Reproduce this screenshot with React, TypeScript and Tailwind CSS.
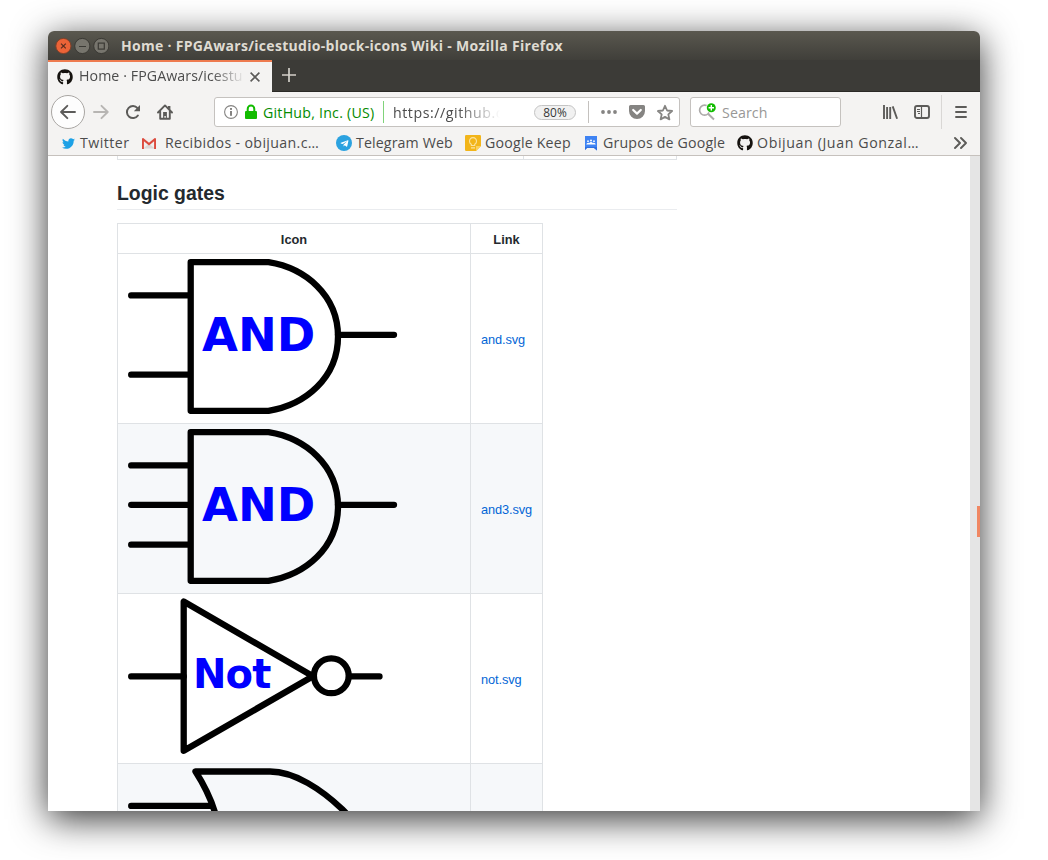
import React from "react";
import { FaGithub, FaTelegramPlane, FaTwitter } from "react-icons/fa";

const ui = "font-['Open_Sans',sans-serif] whitespace-nowrap";

function TitleBar() {
  return (
    <div className="flex h-[29px] shrink-0 items-center bg-gradient-to-b from-[#5a584f] to-[#403f3a] pl-[7px]">
      <svg width="54" height="18" viewBox="0 0 54 18" fill="none">
        <circle cx="8.4" cy="9" r="7.6" fill="#ec6337" stroke="#7f412a" strokeWidth="1" />
        <path d="M6 6.6l4.8 4.8M10.8 6.6L6 11.4" stroke="#5d2f20" strokeWidth="1.3" />
        <circle cx="27.3" cy="9" r="7.6" fill="#77756d" stroke="#3b3a35" strokeWidth="1" />
        <path d="M24 9.5h7" stroke="#3b3a35" strokeWidth="1.2" />
        <circle cx="46.3" cy="9" r="7.6" fill="#77756d" stroke="#3b3a35" strokeWidth="1" />
        <rect x="43.3" y="6.1" width="6" height="6" stroke="#3b3a35" strokeWidth="1.2" />
      </svg>
      <div className={`${ui} ml-[12px] text-[14px] font-bold leading-[18px] tracking-[0.3px] text-[#dfdbd2]`}>
        Home · FPGAwars/icestudio-block-icons Wiki - Mozilla Firefox
      </div>
    </div>
  );
}

function TabStrip() {
  return (
    <div className="flex h-[32px] shrink-0 bg-[#3c3b37]">
      <div className="flex h-[32px] w-[224px] items-center border-t-2 border-[#ee7b4f] bg-[#f4f3f2] pl-[9px]">
        <FaGithub size={16} color="#15120f" />
        <div className={`${ui} mb-[2px] ml-[6px] w-[166px] overflow-hidden text-[14.2px] leading-[20px] tracking-[0.08px] text-[#4c4c4c] [mask-image:linear-gradient(to_right,black_80%,transparent)]`}>
          Home · FPGAwars/icestu
        </div>
        <svg className="ml-[5px]" width="10" height="10" viewBox="0 0 10 10" stroke="#5c5b59" strokeWidth="1.6">
          <path d="M.6.6l8.8 8.8M9.4.6L.6 9.4" />
        </svg>
      </div>
      <div className="flex grow items-center border-b border-[#2a2926] pl-[10px]">
        <svg className="mb-px" width="14" height="14" viewBox="0 0 14 14" stroke="#d3d0c9" strokeWidth="1.7">
          <path d="M7 0v14M0 7h14" />
        </svg>
      </div>
    </div>
  );
}

function NavBar() {
  return (
    <div className="flex h-[40px] shrink-0 items-center pl-[3px]">
      <div className="flex size-[34px] items-center justify-center rounded-full border border-[#a9a6a3] bg-[#fdfdfd]">
        <svg width="16" height="16" viewBox="0 0 16 16" fill="none" stroke="#5c5b59" strokeWidth="1.9" strokeLinecap="round" strokeLinejoin="round">
          <path d="M15 8H1.5M7.3 1.8L1.1 8l6.2 6.2" />
        </svg>
      </div>
      <svg className="ml-2" width="16" height="16" viewBox="0 0 16 16" fill="none" stroke="#b7b5b3" strokeWidth="1.9" strokeLinecap="round" strokeLinejoin="round">
        <path d="M1 8h13.5M8.5 1.8L14.7 8l-6.2 6.2" />
      </svg>
      <svg className="ml-4" width="16" height="16" viewBox="0 0 16 16" fill="none">
        <path d="M12.9 11.5a6 6 0 1 1-.4-7.3" stroke="#5c5b59" strokeWidth="2" strokeLinecap="round" />
        <path d="M15 1v6.2H8.8z" fill="#5c5b59" />
      </svg>
      <svg className="ml-4" width="16" height="16" viewBox="0 0 16 16" fill="none">
        <path d="M1 8.5L8 1.4l7 7.1M3.2 7.5v7.2h9.6V7.5" stroke="#5c5b59" strokeWidth="1.9" strokeLinecap="round" strokeLinejoin="round" />
        <path d="M11 2h2.4v4L11 3.6z" fill="#5c5b59" />
        <path d="M6.1 8h3.8v6H8.8v-2H7.4v2H6.1z" fill="#5c5b59" />
      </svg>

      <div className="ml-[41px] flex h-[30px] w-[466px] shrink-0 items-center rounded-[3px] border border-[#c5c2bf] bg-white pl-[8px]">
        <svg width="16" height="16" viewBox="0 0 16 16" fill="none">
          <circle cx="8" cy="8" r="6.4" stroke="#858482" strokeWidth="1.1" />
          <rect x="7.1" y="7" width="1.8" height="4.8" fill="#777674" />
          <rect x="7.1" y="4" width="1.8" height="1.9" fill="#777674" />
        </svg>
        <svg className="ml-[5px]" width="14" height="16" viewBox="0 0 14 16" fill="none">
          <rect x="1" y="7" width="12" height="8" rx="1" fill="#12bc00" />
          <path d="M3.7 8V4.9a3.3 3.3 0 0 1 6.6 0V8" stroke="#12bc00" strokeWidth="2" />
        </svg>
        <div className={`${ui} ml-[5px] mt-[2px] w-[116px] text-[14.2px] leading-[20px] tracking-[0.23px] text-[#058b00]`}>GitHub, Inc. (US)</div>
        <div className="ml-[4px] h-[22px] w-px bg-[#80d37a]" />
        <div className={`${ui} ml-[9px] mt-[2px] w-[107px] overflow-hidden text-[14.2px] leading-[20px] tracking-[0.55px] text-[#4c4c4c] [mask-image:linear-gradient(to_right,black_60%,transparent)]`}>
          https://github.c
        </div>
        <div className={`${ui} ml-[34px] mt-px flex h-[15px] w-[42px] items-center justify-center rounded-full border border-[#c4c4c4] bg-[#f1f1f1] text-[11.9px] text-[#373737]`}>
          80%
        </div>
        <div className="ml-[12px] h-[22px] w-px bg-[#c4c1be]" />
        <svg className="ml-[11px]" width="18" height="16" viewBox="0 0 18 16" fill="#858482">
          <circle cx="3" cy="8" r="1.9" />
          <circle cx="9" cy="8" r="1.9" />
          <circle cx="15" cy="8" r="1.9" />
        </svg>
        <svg className="ml-[10px]" width="18" height="16" viewBox="0 0 18 16" fill="none">
          <path d="M2.5 1h13A1.5 1.5 0 0 1 17 2.5V7a8 8 0 0 1-16 0V2.5A1.5 1.5 0 0 1 2.500 1z" fill="#858482" />
          <path d="M5.2 6l3.8 3.6L12.8 6" stroke="white" strokeWidth="2.2" strokeLinecap="round" strokeLinejoin="round" />
        </svg>
        <svg className="ml-[10px]" width="18" height="17" viewBox="0 0 18 17" fill="none">
          <path d="M9 1.8l2.1 4.7 5 .5-3.8 3.400 1.1 5L9 12.9l-4.4 2.5 1.1-5L1.9 7l5-.5z" stroke="#858482" strokeWidth="1.8" strokeLinejoin="round" />
        </svg>
      </div>

      <div className="ml-[10px] flex h-[30px] w-[151px] shrink-0 items-center rounded-[3px] border border-[#c5c2bf] bg-white pl-[7px]">
        <svg width="18" height="18" viewBox="0 0 18 18" fill="none">
          <circle cx="6.6" cy="7.2" r="5" stroke="#adabaa" strokeWidth="1.7" />
          <path d="M10.3 11l5.7 5.5" stroke="#adabaa" strokeWidth="2" />
          <circle cx="13.3" cy="4.7" r="5.2" fill="white" />
          <circle cx="13.3" cy="4.7" r="4.5" fill="#12bc00" />
          <path d="M13.3 2v5.4M10.6 4.7H16" stroke="white" strokeWidth="1.4" />
        </svg>
        <div className={`${ui} ml-[6px] mt-[2px] text-[14.2px] leading-[20px] tracking-[0.1px] text-[#989796]`}>Search</div>
      </div>

      <svg className="ml-[41px]" width="16" height="16" viewBox="0 0 16 16" stroke="#5c5b59" strokeWidth="1.9">
        <path d="M2 1v14M5.1 3v12M8.2 3v12M10.7 2.4l4.4 12.3" />
      </svg>
      <svg className="ml-4" width="16" height="16" viewBox="0 0 16 16" fill="none" stroke="#5c5b59">
        <rect x="1" y="2" width="14" height="12" rx="2" strokeWidth="1.9" />
        <path d="M7.5 2v12" strokeWidth="1.2" />
        <path d="M3 5.500h3M3 7.500h3M4 9.500h2" strokeWidth="1" />
      </svg>
      <div className="ml-[11px] h-[34px] w-px bg-[#d9d7d5]" />
      <svg className="ml-[11px]" width="16" height="16" viewBox="0 0 16 16" stroke="#5c5b59" strokeWidth="1.9" strokeLinecap="round">
        <path d="M3 3h10M3 8h10M3 13h10" />
      </svg>
    </div>
  );
}

function GmailIcon() {
  return (
    <svg width="14" height="11" viewBox="0 0 16 12" preserveAspectRatio="none">
      <path d="M1 .5h14v11H1z" fill="#f1eeed" />
      <path d="M1.5 11.5L8 6l6.5 5.5z" fill="#dcd8d6" />
      <path d="M0 1Q0 0 1.4.1L8 5.3 14.6.1Q16 0 16 1v11h-2.2V3.6L8 8.2 2.2 3.6V12H0z" fill="#dc4b3e" />
    </svg>
  );
}

function TelegramIcon() {
  return (
    <span className="flex size-[16px] items-center justify-center rounded-full bg-[#2ba2e0]">
      <FaTelegramPlane size={9} color="white" />
    </span>
  );
}

function KeepIcon() {
  return (
    <svg width="16" height="16" viewBox="0 0 16 16" fill="none">
      <path d="M1.2 0h13.6Q16 0 16 1.2V11l-5 5H1.2Q0 16 0 14.8V1.2Q0 0 1.2 0z" fill="#f2b51a" />
      <path d="M11 16v-5h5z" fill="#fbd15c" />
      <path d="M6.3 9.2a3.5 3.5 0 1 1 3.4 0v1.3H6.3z" stroke="#fbe3a0" strokeWidth="1.1" />
      <path d="M6 12.8h4" stroke="#fbe3a0" strokeWidth="1.2" />
    </svg>
  );
}

function GroupsIcon() {
  return (
    <svg width="14" height="15" viewBox="0 0 14 15">
      <path d="M1 0h12v14.5L10 12H1z" fill="#3f83f3" />
      <path d="M1 14.200L3.200 12H10l3 2.5v-3.5H1z" fill="#2f6fe0" />
      <circle cx="4" cy="5.2" r="0.9" fill="white" />
      <circle cx="7" cy="4.5" r="1" fill="white" />
      <circle cx="10" cy="5.2" r="0.9" fill="white" />
      <path d="M2.3 8.500q.2-1.800 1.9-1.800 .7 0 1.1.3.6-.9 1.7-.9t1.7.9q.4-.3 1.1-.3 1.7 0 1.9 1.800z" fill="white" />
    </svg>
  );
}

const label = `${ui} text-[14.2px] leading-[20px] text-[#4c4c4c]`;

function Bookmarks() {
  return (
    <div className="flex h-[24px] shrink-0 items-center border-b border-[#c6c1bd] pl-[13px] pb-[1px]">
      <div className="flex w-[80px] items-center pl-px">
        <FaTwitter size={13} color="#1da1e6" />
        <span className={`${label} ml-[5px] tracking-[0.45px]`}>Twitter</span>
      </div>
      <div className="flex w-[195px] items-center pl-px">
        <GmailIcon />
        <span className={`${label} ml-[9px] tracking-[0.35px]`}>Recibidos - obijuan.c…</span>
      </div>
      <div className="flex w-[129px] items-center">
        <TelegramIcon />
        <span className={`${label} ml-[4px] tracking-[0.13px]`}>Telegram Web</span>
      </div>
      <div className="flex w-[119px] items-center">
        <KeepIcon />
        <span className={`${label} ml-[4px] tracking-[0.2px]`}>Google Keep</span>
      </div>
      <div className="flex w-[153px] items-center">
        <GroupsIcon />
        <span className={`${label} ml-[5px] tracking-[0.17px]`}>Grupos de Google</span>
      </div>
      <div className="flex w-[216px] items-center">
        <FaGithub size={16} color="#15120f" />
        <span className={`${label} ml-[4px] tracking-[0.6px]`}>Obijuan (Juan Gonzal…</span>
      </div>
      <svg width="14" height="14" viewBox="0 0 14 14" fill="none" stroke="#5c5b59" strokeWidth="1.9" strokeLinejoin="round" strokeLinecap="round">
        <path d="M2 2l5 5-5 5M8 2l5 5-5 5" />
      </svg>
    </div>
  );
}

function GateSvg({ children }: { children: React.ReactNode }) {
  return (
    <svg className="block" width="352" height="169" viewBox="0 0 352 169" fill="none" stroke="black" strokeWidth="6.3" strokeLinecap="round" strokeLinejoin="round">
      {children}
    </svg>
  );
}

function AndGate({ three = false }: { three?: boolean }) {
  return (
    <GateSvg>
      <path d="M13.2 41.4h57.500M13.2 120.7h57.500M220 80.8h56" />
      {three && <path d="M13.2 80.8h57.500" />}
      <path d="M72.7 8.2H150.5C187 14 220 41 220 82.5S187 151 150.5 156.8H72.7z" />
      <text x="84" y="96.8" fontSize="46.4" fontWeight="bold" fill="#0000ff" stroke="none" className="font-['DejaVu_Sans',sans-serif]">AND</text>
    </GateSvg>
  );
}

function NotGate() {
  return (
    <GateSvg>
      <path d="M13.2 82.4h52.5M231.5 82.4h30" />
      <path d="M65.7 7.6V156.8L195 82.2z" />
      <circle cx="213.3" cy="81.8" r="17.4" />
      <text x="75" y="94" fontSize="40" fontWeight="bold" fill="#0000ff" stroke="none" className="font-['DejaVu_Sans',sans-serif] tracking-[-0.9px]">Not</text>
    </GateSvg>
  );
}

function OrGate() {
  return (
    <GateSvg>
      <path d="M13.2 41.9H92" />
      <path d="M77.5 7.5H152C177 7.5 204 26 224 45Q243 64 250 81C225 125 190 156 152 156H77.5C113 105 108 55 77.5 7.5z" />
    </GateSvg>
  );
}

const rows = [
  { gate: <AndGate />, link: "and.svg" },
  { gate: <AndGate three />, link: "and3.svg" },
  { gate: <NotGate />, link: "not.svg" },
  { gate: <OrGate />, link: "" },
];

function WikiPage() {
  return (
    <div className="flex min-h-0 grow overflow-hidden bg-white font-['Liberation_Sans',sans-serif] text-[#24292e]">
      <div className="min-w-0 grow pl-[69px]">
        <div className="flex h-[4px] w-[560px] border-x border-b border-[#dfe2e5]">
          <div className="w-[406px] border-r border-[#dfe2e5]" />
        </div>
        <h2 className="mt-[19px] h-[31px] w-[560px] border-b border-[#eaecef] pt-[2px] text-[19.4px] font-bold leading-[24px]">Logic gates</h2>
        <div className="mt-[13px] w-[426px] border-l border-t border-[#dfe2e5] text-[12.8px]">
          <div className="flex h-[30px] border-b border-[#dfe2e5] font-bold leading-[31px]">
            <div className="w-[353px] border-r border-[#dfe2e5] text-center">Icon</div>
            <div className="w-[72px] border-r border-[#dfe2e5] text-center">Link</div>
          </div>
          {rows.map((row, i) => (
            <div key={i} className={`flex h-[170px] border-b border-[#dfe2e5] ${i % 2 ? "bg-[#f6f8fa]" : "bg-white"}`}>
              <div className="w-[353px] border-r border-[#dfe2e5]">{row.gate}</div>
              <div className="flex w-[72px] items-center border-r border-[#dfe2e5] pl-[10px] pt-[3px] tracking-[-0.1px] text-[#0366d6]">{row.link}</div>
            </div>
          ))}
        </div>
      </div>
      <div className="flex w-[10px] shrink-0 justify-end bg-[#e5e5e5]">
        <div className="mt-[350px] h-[31px] w-[3px] bg-[#f08763]" />
      </div>
    </div>
  );
}

export default function App() {
  return (
    <div className="h-[860px] w-[1048px] overflow-hidden bg-white pl-[48px] pt-[31px]">
      <div className="h-[780px] w-[932px] rounded-t-[6px] shadow-[0_8px_36px_rgba(0,0,0,0.8)]">
        <div className="flex h-full flex-col overflow-hidden rounded-t-[6px] bg-[#f4f3f2]">
          <TitleBar />
          <TabStrip />
          <NavBar />
          <Bookmarks />
          <WikiPage />
        </div>
      </div>
    </div>
  );
}
